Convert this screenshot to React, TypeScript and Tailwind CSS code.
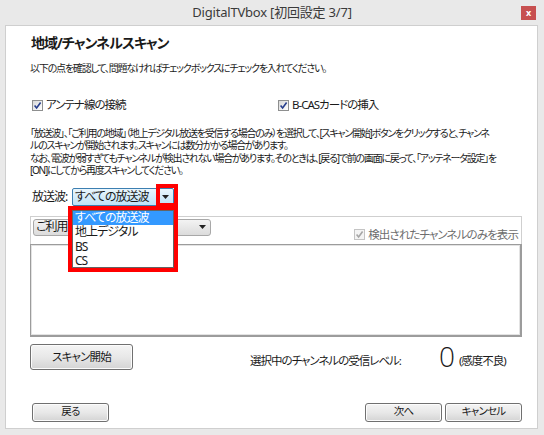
import clsx from "clsx";

const jp =
  "font-['Noto_Sans','Noto_Sans_CJK_JP',sans-serif] [font-feature-settings:'palt']";

function Check({ disabled }: { disabled?: boolean }) {
  return (
    <span
      className={clsx(
        "w-[11px] h-[11px] border flex items-center justify-center shrink-0",
        disabled
          ? "border-[#c4c4c4] bg-[#f4f4f4]"
          : "border-[#8e8f8f] bg-gradient-to-br from-[#d8d8d8] to-white"
      )}
    >
      <svg width="9" height="9" viewBox="0 0 9 9">
        <path
          d="M1.6 4.6 L3.6 7 L7.6 1.6"
          stroke={disabled ? "#a6a6a6" : "#263d8c"}
          strokeWidth="1.6"
          fill="none"
        />
      </svg>
    </span>
  );
}

function Arrow({ color = "#222" }: { color?: string }) {
  return (
    <svg width="7" height="4" viewBox="0 0 7 4">
      <path d="M0 0 H7 L3.5 4 Z" fill={color} />
    </svg>
  );
}

function Btn({ label, className }: { label: string; className?: string }) {
  return (
    <div
      className={clsx(
        "flex items-center justify-center rounded-[3px] border border-[#707070] bg-gradient-to-b from-[#f4f4f4] via-[#e8e8e8] to-[#d4d4d4] text-[#1a1a1a] tracking-[-0.8px] whitespace-nowrap shadow-[inset_0_0_0_1px_#fcfcfc]",
        className
      )}
    >
      {label}
    </div>
  );
}

export default function App() {
  return (
    <div className={clsx("w-[544px] h-[435px] bg-[#e9e9e9] overflow-hidden", jp)}>
      {/* title bar */}
      <div className="h-[25px] grid grid-cols-[1fr_auto_1fr] items-center">
        <div />
        <div className="text-[13px] text-[#3a3a3a] tracking-[-0.2px] pt-[1px]">
          DigitalTVbox [初回設定 3/7]
        </div>
        <div className="flex justify-end pr-[8px]">
          <div className="w-[15px] h-[14px] bg-[#c75050] flex items-center justify-center text-white text-[9px] leading-none font-bold">
            x
          </div>
        </div>
      </div>

      {/* panel */}
      <div className="ml-[5px] w-[533px] h-[404px] bg-white border border-[#cfcfcf] pl-[24px] pr-[15px] pt-[7px] flex flex-col text-[#1a1a1a]">
        <div className="text-[14px] leading-[20px] font-bold tracking-[-1px] pl-[1px]">
          地域/チャンネルスキャン
        </div>
        <div className="mt-[8px] text-[10px] leading-[14px] tracking-[-1.2px]">
          以下の点を確認して、問題なければチェックボックスにチェックを入れてください。
        </div>

        <div className="mt-[22px] flex items-center h-[16px] pl-[2px] text-[11.5px] tracking-[-1px]">
          <div className="w-[246px] flex items-center gap-[3px]">
            <Check />
            <span>アンテナ線の接続</span>
          </div>
          <div className="flex items-center gap-[3px]">
            <Check />
            <span>B-CASカードの挿入</span>
          </div>
        </div>

        <div className="mt-[14px] text-[10px] leading-[12.4px] tracking-[-1.25px] whitespace-nowrap">
          「放送波」、「ご利用の地域」（地上デジタル放送を受信する場合のみ）を選択して、[スキャン開始]ボタンをクリックすると、チャンネ
          <br />
          ルのスキャンが開始されます。スキャンには数分かかる場合があります。
          <br />
          なお、電波が弱すぎてもチャンネルが検出されない場合があります。そのときは、[戻る]で前の画面に戻って、「アッテネータ設定」を
          <br />
          [ON]にしてから再度スキャンしてください。
        </div>

        {/* 放送波 row */}
        <div className="mt-[11px] h-[18px] flex items-center text-[12px] tracking-[-1px] relative z-10 whitespace-nowrap">
          <span className="w-[42px] pl-[2px]">放送波:</span>
          <div className="relative w-[102px] h-[18px] border border-[#3c7fb1] rounded-[2px] bg-gradient-to-b from-[#eaf6fd] to-[#bfe2f7] flex items-center">
            <span className="pl-[2px] flex-1">すべての放送波</span>
            <div className="w-[16px] h-full border-l border-[#7eb4ea] flex items-center justify-center">
              <Arrow />
            </div>
            {/* annotation around arrow */}
            <div className="absolute left-[83px] top-[-5px] w-[22px] h-[23px] border-4 border-[#ff0000]" />
            {/* open list */}
            <div className="absolute left-[-5px] top-[17px] w-[110px] h-[66px] border-4 border-[#ff0000] bg-white">
              <div className="h-full border border-[#646464] flex flex-col">
                <div className="h-[14.5px] bg-[#3399ff] text-white pl-[2px] leading-[14.5px]">
                  すべての放送波
                </div>
                <div className="h-[14.5px] pl-[2px] leading-[14.5px]">地上デジタル</div>
                <div className="h-[14.5px] pl-[2px] leading-[14.5px]">BS</div>
                <div className="h-[14.5px] pl-[2px] leading-[14.5px]">CS</div>
              </div>
            </div>
          </div>
        </div>

        {/* group */}
        <div className="mt-[10px] w-[492px] flex flex-col">
          <div className="h-[28px] border-t border-x border-[#cfcfcf] flex items-start justify-between pl-[2px] pr-[3px] pt-[2px]">
            <div className="w-[178px] h-[17px] rounded-[3px] border border-[#a8a8a8] bg-gradient-to-b from-[#f3f3f3] to-[#dcdcdc] flex items-center justify-between pl-[2px] pr-[4px] text-[12px] tracking-[-1px] whitespace-nowrap">
              <span>ご利用の地域:</span>
              <Arrow />
            </div>
            <div className="flex items-center gap-[3px] pt-[7px] text-[11.5px] tracking-[-0.9px] text-[#6d6d6d] whitespace-nowrap">
              <Check disabled />
              <span>検出されたチャンネルのみを表示</span>
            </div>
          </div>
          <div className="h-[93px] border border-[#9c9c9c] shadow-[inset_0_0_0_1px_#e3e3e3] border-b-2 border-r-2" />
        </div>

        {/* scan row */}
        <div className="mt-[7px] h-[26px] flex items-end whitespace-nowrap">
          <Btn label="スキャン開始" className="w-[103px] h-[26px] text-[11.5px]" />
          <span className="ml-[117px] mb-[0px] text-[11.5px] tracking-[-1px]">
            選択中のチャンネルの受信レベル:
          </span>
          <span className="ml-[38px] text-[28px] leading-[28px] font-light font-['Open_Sans',sans-serif]">
            0
          </span>
          <span className="ml-[4px] mb-[0px] text-[11.5px] tracking-[-1px]">(感度不良)</span>
        </div>

        {/* bottom buttons */}
        <div className="mt-[33px] flex items-center pl-[2px]">
          <Btn label="戻る" className="w-[77px] h-[19px] text-[10.5px]" />
          <div className="ml-auto flex gap-[3px]">
            <Btn label="次へ" className="w-[77px] h-[19px] text-[10.5px]" />
            <Btn label="キャンセル" className="w-[77px] h-[19px] text-[10.5px]" />
          </div>
        </div>
      </div>
    </div>
  );
}
